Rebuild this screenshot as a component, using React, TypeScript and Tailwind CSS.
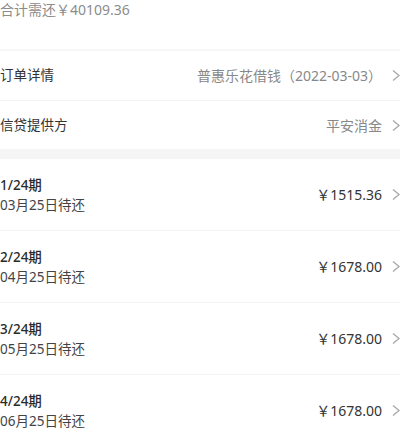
import React from 'react';

const font = { fontFamily: '"Noto Sans", "Noto Sans CJK SC", sans-serif' };

const Chevron: React.FC = () => (
  <svg width="8" height="13" viewBox="0 0 8 13" className="shrink-0 ml-[10px]">
    <polyline points="1,1.5 7,6.5 1,11.5" fill="none" stroke="#a8a8a8" strokeWidth="1.3" />
  </svg>
);

const bills = [
  { term: '1/24期', date: '03月25日待还', amount: '￥1515.36' },
  { term: '2/24期', date: '04月25日待还', amount: '￥1678.00' },
  { term: '3/24期', date: '05月25日待还', amount: '￥1678.00' },
  { term: '4/24期', date: '06月25日待还', amount: '￥1678.00' },
];

export default function App() {
  return (
    <div className="w-[400px] h-[446px] overflow-hidden bg-white" style={font}>
      <div className="h-[49px] text-[14px] leading-[20px] text-[#8c8c8c]">合计需还￥40109.36</div>
      <div className="h-[2px] bg-[#f6f6f6]" />

      <div className="h-[49px] flex items-center">
        <span className="flex-1 text-[13.5px] text-[#333]">订单详情</span>
        <span className="text-[14px] text-[#888]">普惠乐花借钱（2022-03-03）</span>
        <Chevron />
      </div>
      <div className="h-px bg-[#f2f2f2]" />
      <div className="h-[48px] flex items-center">
        <span className="flex-1 text-[13.5px] text-[#333]">信贷提供方</span>
        <span className="text-[14px] text-[#888]">平安消金</span>
        <Chevron />
      </div>
      <div className="h-[10px] bg-[#f5f5f5]" />

      {bills.map((b) => (
        <div key={b.term}>
          <div className="h-[71px] flex items-center">
            <div className="flex-1 flex flex-col pt-[2px]">
              <span className="text-[13.5px] leading-[20px] font-medium text-[#2a2a2a]">{b.term}</span>
              <span className="text-[13.5px] leading-[21px] text-[#444]">{b.date}</span>
            </div>
            <span className="text-[14px] text-[#333]">{b.amount}</span>
            <Chevron />
          </div>
          <div className="h-px bg-[#f2f2f2]" />
        </div>
      ))}
    </div>
  );
}
